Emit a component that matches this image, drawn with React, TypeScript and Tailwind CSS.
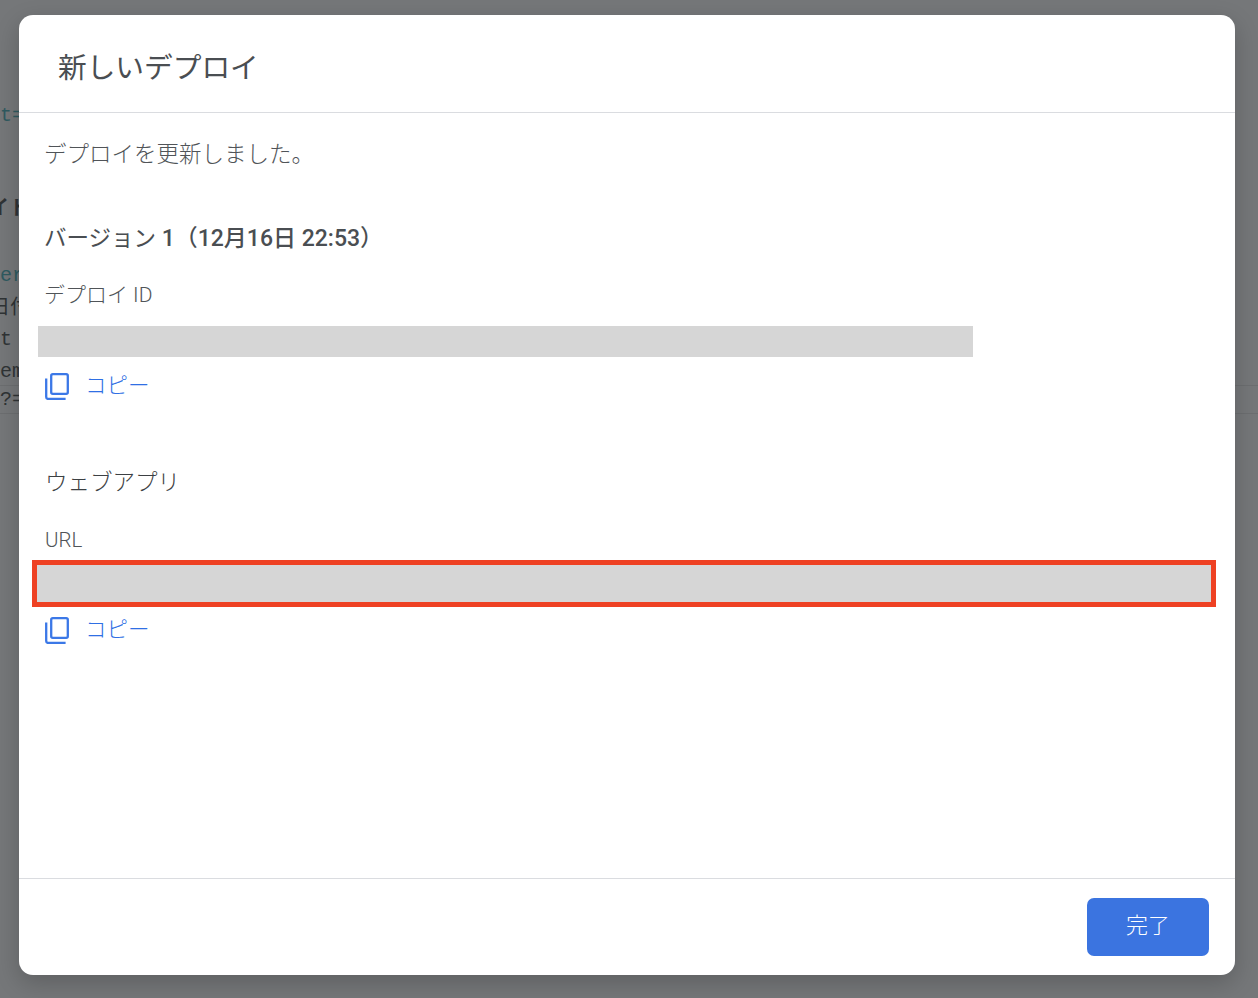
const sans = 'font-["Roboto","Noto_Sans_CJK_JP",sans-serif]'

function CopyIcon() {
  return (
    <svg width="24" height="27" viewBox="0 0 24 27" fill="none" stroke="#3b78e7" strokeWidth="2.3" className="shrink-0">
      <path d="M1.2 5.5v18.6a1.8 1.8 0 0 0 1.8 1.8h17.6" />
      <rect x="6.2" y="1.2" width="16.6" height="19.6" rx="1.6" />
    </svg>
  )
}

function CopyLink() {
  return (
    <div className="flex items-center pl-[26px] h-6 text-[21.5px] leading-6 font-light text-[#2f6fe4]">
      <CopyIcon />
      <span className="ml-[16px]">コピー</span>
    </div>
  )
}

function Backdrop() {
  return (
    <div className="h-full bg-[#757779] font-['Liberation_Mono','Noto_Sans_CJK_JP',monospace] text-[20px] leading-8 text-[#2f3335] overflow-hidden">
      <div className="pt-[100px] text-[#2f5a60]">t=</div>
      <div className="mt-[62px] -ml-[11px] font-bold">イト</div>
      <div className="mt-[34px] text-[#2f5a60]">er</div>
      <div className="mt-[1px] -ml-[10px]">日付</div>
      <div className="-mt-[1px]">t</div>
      <div>em</div>
      <div className="-mt-[3px] h-[29px] border-t border-b border-[#6c6e70] leading-[27px]">?=</div>
    </div>
  )
}

export default function App() {
  return (
    <div className={`relative w-[1258px] h-[998px] overflow-hidden ${sans}`}>
      <Backdrop />
      <div className="absolute left-[19px] top-[15px] w-[1216px] h-[960px] bg-white rounded-[14px] shadow-[0_8px_24px_rgba(0,0,0,0.2)] flex flex-col">
        <div className="h-[98px] shrink-0 border-b border-[#dadce0] pl-[39px] pt-[33px] text-[28.7px] leading-[40px] text-[#4a4e52]">
          新しいデプロイ
        </div>
        <div className="flex-1">
          <div className="pt-[26px] pl-[25px] text-[22.5px] leading-[30px] font-light text-[#505458]">デプロイを更新しました。</div>
          <div className="mt-[54px] h-[30px] pl-[25px] text-[22.5px] leading-[30px] text-[#4a4e52]">
            バージョン <span className="text-[23px] leading-none font-medium">1（12月16日 22:53）</span>
          </div>
          <div className="mt-[27px] pl-[25px] text-[21px] leading-[30px] font-light text-[#505458]">デプロイ ID</div>
          <div className="mt-[16px] ml-[19px] w-[935px] h-[31px] bg-[#d6d6d6]" />
          <div className="mt-[17px]"><CopyLink /></div>
          <div className="mt-[69px] pl-[26px] text-[22.5px] leading-[30px] font-light text-[#3c4043]">ウェブアプリ</div>
          <div className="mt-[28px] pl-[26px] text-[20.5px] leading-[30px] font-light text-[#505458]">URL</div>
          <div className="mt-[5px] ml-[13px] w-[1184px] h-[47px] border-[5px] border-[#ee4123] bg-[#d6d6d6]" />
          <div className="mt-[11px]"><CopyLink /></div>
        </div>
        <div className="h-[97px] shrink-0 border-t border-[#dadce0] flex justify-end items-start pt-[19px] pr-[26px]">
          <button className="w-[122px] h-[58px] rounded-[7px] bg-[#3b74e0] text-white text-[22px] leading-[54px] font-light pb-[2px]">完了</button>
        </div>
      </div>
    </div>
  )
}
